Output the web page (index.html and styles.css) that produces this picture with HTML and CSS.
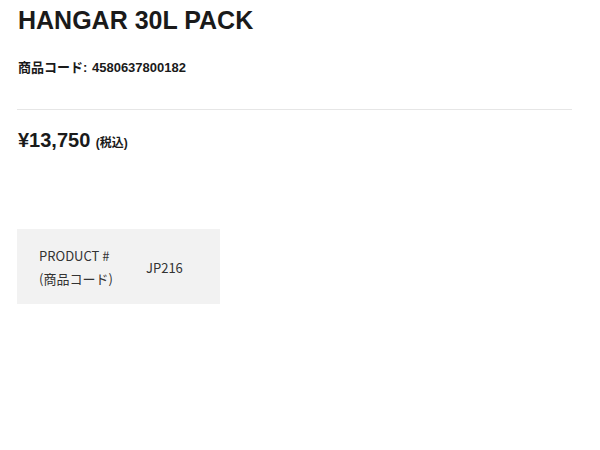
FILE: index.html
```html
<!DOCTYPE html>
<html lang="ja">
<head>
    <meta charset="UTF-8">
    <title>HANGAR 30L PACK</title>
    <link rel="stylesheet" href="styles.css">
</head>
<body>
    <div class="product">
        <h1 class="product-name">HANGAR 30L PACK</h1>
        <div class="product-code">
            <span class="code-label">商品コード:</span>
            <span class="code-value">4580637800182</span>
        </div>
        <hr class="divider">
        <div class="price">
            <span class="price-amount">¥13,750</span>
            <span class="price-tax">(税込)</span>
        </div>
        <table class="spec-table">
            <tr>
                <th>PRODUCT #<br>(商品コード)</th>
                <td>JP216</td>
            </tr>
        </table>
    </div>
</body>
</html>
```

FILE: styles.css
```css
* { box-sizing: border-box; margin: 0; padding: 0; }
body {
    font-family: 'Liberation Sans', Arial, 'Noto Sans CJK JP', sans-serif;
    background-color: #FFFFFF;
    color: #1a1a1a;
}
.product {
    padding: 5px 28px 0 18px;
}
.product-name {
    font-size: 25px;
    font-weight: 700;
    line-height: 30px;
    color: #1a1a1a;
}
.product-code {
    margin-top: 24px;
    font-size: 13px;
    font-weight: 700;
    line-height: 17px;
}
.code-label { margin-right: 1px; }
.divider {
    border: none;
    border-top: 1px solid #e6e6e6;
    margin: 33px 0 0 -1px;
}
.price {
    margin-top: 17px;
    line-height: 26px;
}
.price-amount {
    font-size: 20px;
    font-weight: 700;
}
.price-tax {
    font-size: 12px;
    font-weight: 700;
    margin-left: 1px;
}
.spec-table {
    margin: 73px 0 0 -1px;
    width: 203px;
    height: 75px;
    background-color: #f2f2f2;
    border-collapse: collapse;
    font-family: 'Noto Sans CJK JP', sans-serif;
    font-size: 13px;
    color: #333333;
}
.spec-table th {
    font-weight: 400;
    text-align: left;
    line-height: 23px;
    padding: 0 0 0 22px;
    width: 129px;
}
.spec-table td {
    padding: 2px 0 0 0;
}
```
